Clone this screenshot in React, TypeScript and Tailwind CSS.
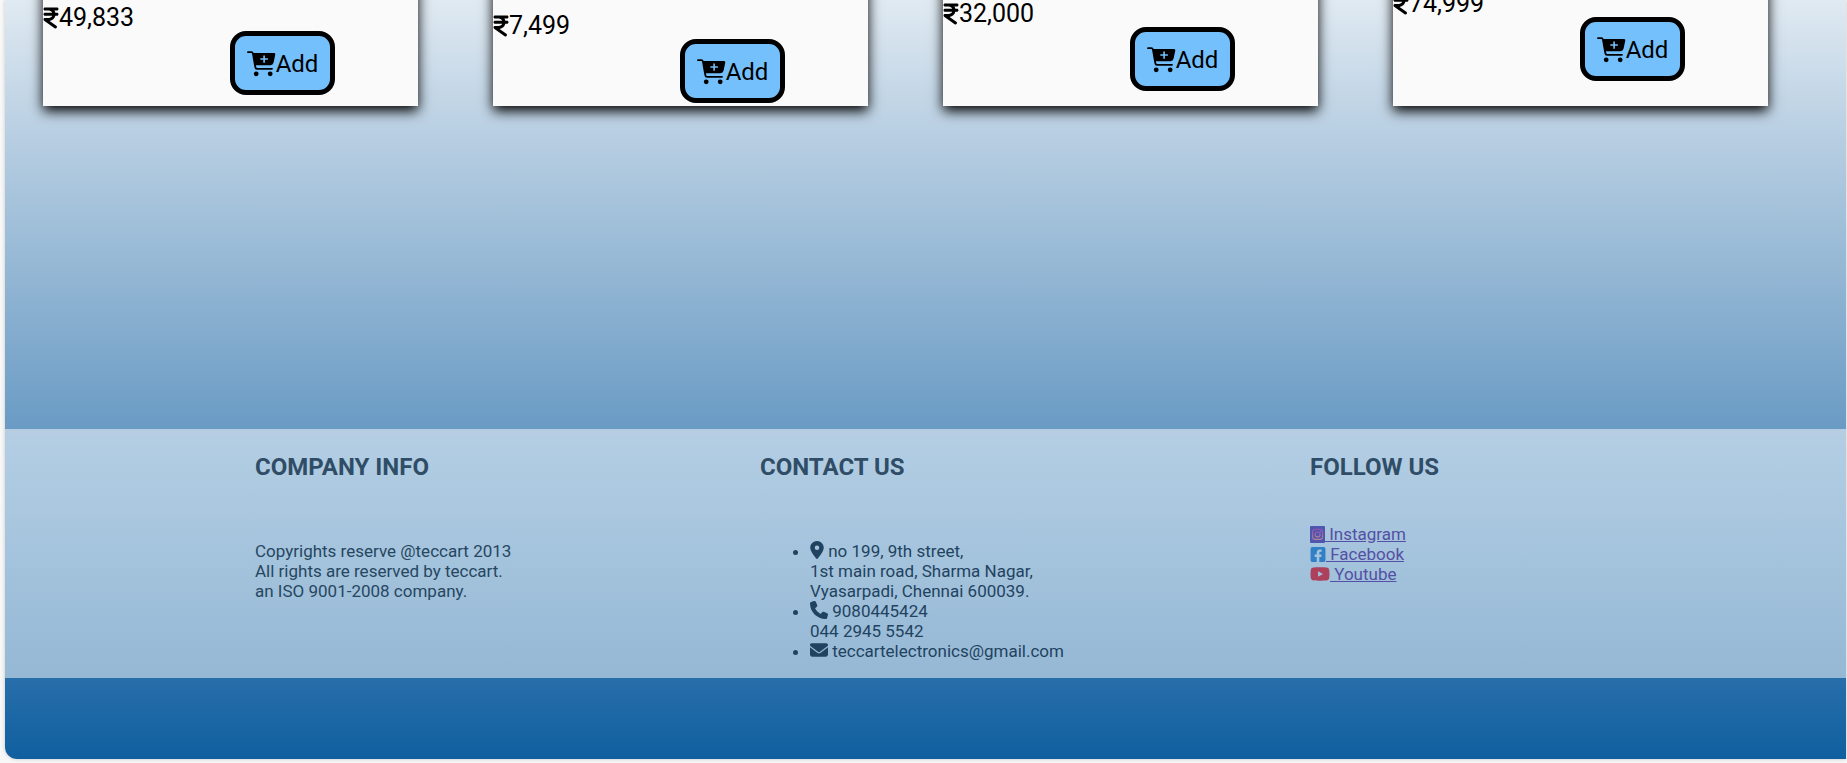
import type { ReactNode } from "react";
import { FaIndianRupeeSign, FaLocationDot, FaPhone, FaEnvelope, FaYoutube } from "react-icons/fa6";
import { FaFacebookSquare } from "react-icons/fa";

type Product = { price: string; space: string };

const products: Product[] = [
  { price: "49,833", space: "pb-[11px]" },
  { price: "7,499", space: "pb-[3px]" },
  { price: "32,000", space: "pb-[15px]" },
  { price: "74,999", space: "pb-[25px]" },
];

function CartPlusIcon() {
  return (
    <svg viewBox="0 0 29 26" className="h-[26px] w-[29px] shrink-0" aria-hidden="true">
      <path
        d="M1 1.2H4.4Q5.6 1.2 5.9 2.4L8.3 16Q8.6 17.8 10 17.8H25"
        fill="none"
        stroke="currentColor"
        strokeWidth="1.8"
        strokeLinecap="round"
      />
      <path
        fillRule="evenodd"
        fill="currentColor"
        d="M5.6 2H27Q28.6 2 28.3 3.6L26.6 11.6Q26 14.2 23.4 14.2H7.8ZM16.3 4.4V7.3H13.3V8.8H16.3V11.8H17.9V8.8H20.9V7.3H17.9V4.4Z"
      />
      <circle cx="9.2" cy="22.8" r="2.4" fill="currentColor" />
      <circle cx="23.2" cy="22.8" r="2.4" fill="currentColor" />
    </svg>
  );
}

function InstagramIcon() {
  return (
    <svg viewBox="0 0 15 17" className="inline-block h-[17px] w-[15px] align-[-3px]" aria-hidden="true">
      <defs>
        <linearGradient id="glyph" x1="0" y1="0" x2="0" y2="1">
          <stop offset="0" stopColor="#8a56b4" />
          <stop offset="1" stopColor="#b58296" />
        </linearGradient>
      </defs>
      <rect width="15" height="17" rx="1" fill="#5055ad" />
      <rect x="2.6" y="3.4" width="10" height="10" rx="2.6" fill="none" stroke="url(#glyph)" strokeWidth="1.1" />
      <circle cx="7.6" cy="8.4" r="2.5" fill="none" stroke="url(#glyph)" strokeWidth="1.1" />
      <circle cx="10.5" cy="5.6" r="0.7" fill="#a070b0" />
    </svg>
  );
}

function ProductCard({ price, space }: Product) {
  return (
    <article className={`-mt-5 flex h-[126px] flex-col justify-end bg-[#fafafa] text-[25px] text-black shadow-[0_5px_12px_#000] ${space}`}>
      <p className="flex items-center leading-[26px]">
        <FaIndianRupeeSign className="h-6 w-4 shrink-0" />
        {price}
      </p>
      <button
        type="button"
        className="ml-[187px] flex h-16 w-[105px] shrink-0 items-center justify-center rounded-2xl border-5 border-black bg-[#74c0fc] pt-0.5 text-2xl"
      >
        <CartPlusIcon />
        Add
      </button>
    </article>
  );
}

function FooterColumn({ title, gap, children }: { title: string; gap: string; children: ReactNode }) {
  return (
    <section className={`flex flex-col ${gap}`}>
      <h2 className="text-2xl leading-7 font-bold text-[#2f4d66]">{title}</h2>
      {children}
    </section>
  );
}

export default function App() {
  return (
    <div className="bg-[#f8f8f8] pr-px pb-1 pl-[5px] font-['Roboto',sans-serif]">
      <div className="overflow-hidden rounded-bl-xl bg-[linear-gradient(#e0eaf2_0px,#bad0e3_128px,#6a9bc4_429px,#2a70ac_670px,#105f9f_759px)] shadow-[0_0_4px_#0003]">
        <main className="grid h-[429px] grid-cols-4 items-start gap-[75px] pr-[78px] pl-[38px]">
          {products.map((product) => (
            <ProductCard key={product.price} {...product} />
          ))}
        </main>
        <footer className="grid grid-cols-[505fr_550fr_536fr] bg-[linear-gradient(#b7cde2,#b2cde3_18px,#95b8d5)] pt-6 pb-[17px] pl-[250px] text-[17px] leading-5 text-[#264761]">
          <FooterColumn title="COMPANY INFO" gap="gap-[60px]">
            <p>
              Copyrights reserve @teccart 2013
              <br />
              All rights are reserved by teccart.
              <br />
              an ISO 9001-2008 company.
            </p>
          </FooterColumn>
          <FooterColumn title="CONTACT US" gap="gap-[60px]">
            <ul className="list-disc pl-[50px] text-[#1f4360]">
              <li>
                <FaLocationDot className="inline-block h-[18px] w-[14px] align-[-2px]" /> no 199, 9th street,
                <br />
                1st main road, Sharma Nagar,
                <br />
                Vyasarpadi, Chennai 600039.
              </li>
              <li>
                <FaPhone className="inline-block size-[18px] align-[-2px]" /> 9080445424
                <br />
                044 2945 5542
              </li>
              <li>
                <FaEnvelope className="inline-block size-[18px] align-[-2px]" /> teccartelectronics@gmail.com
              </li>
            </ul>
          </FooterColumn>
          <FooterColumn title="FOLLOW US" gap="gap-[43px]">
            <nav className="flex flex-col items-start text-[#5450a4]">
              <a href="#instagram" className="underline">
                <InstagramIcon /> Instagram
              </a>
              <a href="#facebook" className="underline">
                <FaFacebookSquare className="inline-block h-[17px] w-4 align-[-3px] text-[#3180c6]" /> Facebook
              </a>
              <a href="#youtube" className="underline">
                <FaYoutube className="inline-block h-[18px] w-5 align-[-3px] text-[#ad405b]" /> Youtube
              </a>
            </nav>
          </FooterColumn>
        </footer>
        <div className="h-[81px]" />
      </div>
    </div>
  );
}
